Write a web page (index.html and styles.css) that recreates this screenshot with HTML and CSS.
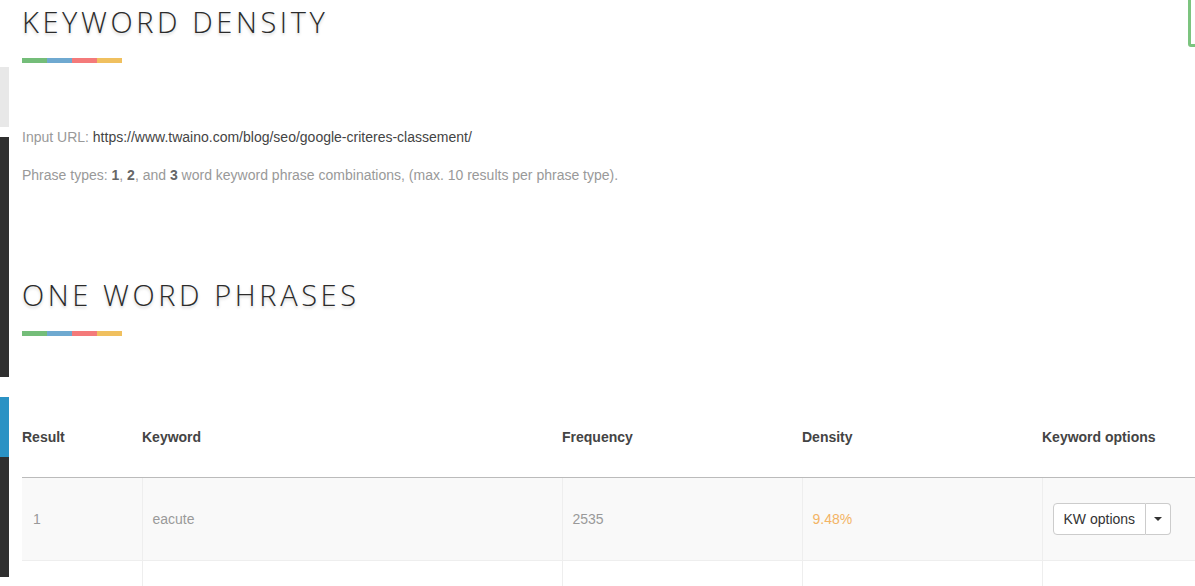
FILE: index.html
```html
<!DOCTYPE html>
<html>
<head>
  <meta charset="utf-8" />
  <title>Keyword Density</title>
  <link rel="stylesheet" href="styles.css">
</head>
<body>
  <div class="rail">
    <div class="rail-light"></div>
    <div class="rail-dark"></div>
    <div class="rail-blue"></div>
    <div class="rail-dark rail-last"></div>
  </div>
  <div class="corner-box"></div>

  <div class="main">
    <h1 class="title">KEYWORD DENSITY</h1>
    <div class="stripe"><span class="s-green"></span><span class="s-blue"></span><span class="s-red"></span><span class="s-yellow"></span></div>

    <p class="info first">Input URL: <span class="url">https://www.twaino.com/blog/seo/google-criteres-classement/</span></p>
    <p class="info">Phrase types: <b>1</b>, <b>2</b>, and <b>3</b> word keyword phrase combinations, (max. 10 results per phrase type).</p>

    <h2 class="title section">ONE WORD PHRASES</h2>
    <div class="stripe"><span class="s-green"></span><span class="s-blue"></span><span class="s-red"></span><span class="s-yellow"></span></div>

    <table class="results">
      <thead>
        <tr>
          <th class="c-result">Result</th>
          <th class="c-keyword">Keyword</th>
          <th class="c-freq">Frequency</th>
          <th class="c-density">Density</th>
          <th class="c-options">Keyword options</th>
        </tr>
      </thead>
      <tbody>
        <tr class="odd">
          <td>1</td>
          <td>eacute</td>
          <td>2535</td>
          <td class="density">9.48%</td>
          <td>
            <div class="btn-group">
              <button type="button" class="btn">KW options</button><button type="button" class="btn toggle"><span class="caret"></span></button>
            </div>
          </td>
        </tr>
        <tr>
          <td></td>
          <td></td>
          <td></td>
          <td></td>
          <td></td>
        </tr>
      </tbody>
    </table>
  </div>
</body>
</html>
```

FILE: styles.css
```css
html, body {
  margin: 0;
  padding: 0;
  overflow: hidden;
}
body {
  font-family: "Liberation Sans", Arial, sans-serif;
  font-size: 14px;
  color: #333;
  background: #fff;
  display: flex;
  height: 586px;
}
.rail {
  width: 9px;
  flex: none;
  display: flex;
  flex-direction: column;
}
.rail-light {
  margin-top: 67px;
  height: 60px;
  background-color: #e8e8e8;
}
.rail-dark {
  margin-top: 10px;
  height: 240px;
  background-color: #2f2f2f;
}
.rail-blue {
  margin-top: 20px;
  height: 60px;
  background-color: #2b92c4;
}
.rail-last {
  margin-top: 0;
  height: 120px;
}
.corner-box {
  position: absolute;
  top: -10px;
  left: 1188px;
  width: 30px;
  height: 51px;
  border: 3px solid #7cc47f;
  border-radius: 3px;
}
.main {
  margin-left: 13px;
  flex: 1;
}
.title {
  font-family: "Open Sans", sans-serif;
  font-weight: 300;
  font-size: 29px;
  line-height: 36px;
  letter-spacing: 3.6px;
  color: #2b2b2b;
  text-shadow: 0 2px 3px rgba(0, 0, 0, 0.18);
  margin: 4px 0 0 0;
}
.section {
  margin-top: 92px;
}
.stripe {
  display: flex;
  margin-top: 18px;
  height: 5px;
}
.stripe span {
  width: 25px;
  height: 5px;
}
.s-green { background-color: #74bd79; }
.s-blue { background-color: #6fa9d0; }
.s-red { background-color: #f47a7a; }
.s-yellow { background-color: #f0c05f; }
.info {
  margin: 0;
  line-height: 20px;
  color: #999;
}
.info.first {
  margin-top: 64px;
}
.info + .info {
  margin-top: 18px;
}
.url {
  color: #444;
}
.info b {
  color: #666;
}
.results {
  border-collapse: collapse;
  margin-top: 61px;
  width: 1260px;
  table-layout: fixed;
}
.results th {
  text-align: left;
  font-weight: bold;
  color: #444;
  padding: 20px 0 20px 0;
  height: 40px;
  border-bottom: 1px solid #bbb;
}
.c-result { width: 120px; }
.c-keyword { width: 420px; }
.c-freq { width: 240px; }
.c-density { width: 240px; }
.c-options { width: 240px; }
.results td {
  color: #999;
  padding: 0 10px;
  height: 82px;
  border-left: 1px solid #eee;
  border-bottom: 1px solid #eee;
}
.results td:first-child {
  border-left: none;
  padding-left: 11px;
}
.results tr.odd td {
  background-color: #f9f9f9;
}
.results td.density {
  color: #f3b465;
}
.btn-group {
  display: flex;
}
.btn {
  font-family: "Liberation Sans", Arial, sans-serif;
  font-size: 14px;
  color: #333;
  background: #fff;
  border: 1px solid #ccc;
  height: 32px;
  padding: 0 10px;
  border-radius: 4px 0 0 4px;
}
.btn.toggle {
  border-left: none;
  border-radius: 0 4px 4px 0;
  width: 25px;
  padding: 0;
  display: flex;
  align-items: center;
  justify-content: center;
}
.caret {
  width: 0;
  height: 0;
  border-top: 4px solid #333;
  border-left: 4px solid transparent;
  border-right: 4px solid transparent;
}
```
